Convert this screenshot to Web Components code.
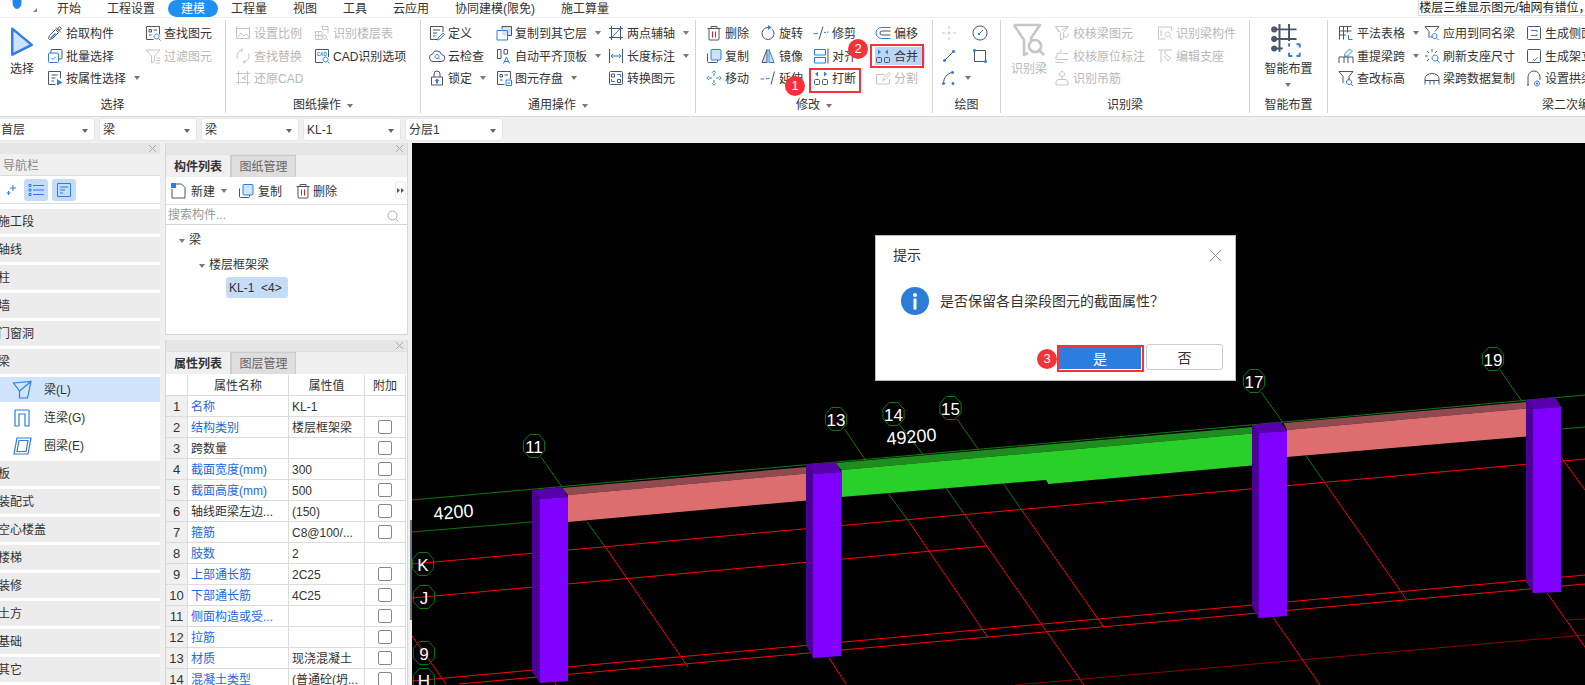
<!DOCTYPE html>
<html lang="zh"><head><meta charset="utf-8"><title>GTJ</title>
<style>
html,body{margin:0;padding:0;height:100%;overflow:hidden;background:#f0f0f0}
body{font:12px/1.2 "Liberation Sans","Noto Sans CJK SC",sans-serif;color:#333}
</style></head><body>
<gtj-app>
  <tab-bar slot="tabs">
    <x-tab>开始</x-tab><x-tab>工程设置</x-tab><x-tab active>建模</x-tab><x-tab>工程量</x-tab><x-tab>视图</x-tab><x-tab>工具</x-tab><x-tab>云应用</x-tab><x-tab>协同建模(限免)</x-tab><x-tab>施工算量</x-tab>
  </tab-bar>
  <r-bar slot="ribbon">
    <r-group w="226" pad="9" label="选择">
      <r-col w="38"><r-large icon="select" isize="26" text="选择"></r-large></r-col>
      <r-col w="98"><r-btn icon="pick" text="拾取构件"></r-btn><r-btn icon="batch" text="批量选择"></r-btn><r-btn icon="attr" text="按属性选择" arrow></r-btn></r-col>
      <r-col><r-btn icon="find" text="查找图元"></r-btn><r-btn off icon="filter" text="过滤图元"></r-btn></r-col>
    </r-group>
    <r-group w="195" pad="9" label="图纸操作" arrow>
      <r-col w="79"><r-btn off icon="scale" text="设置比例"></r-btn><r-btn off icon="replace" text="查找替换"></r-btn><r-btn off icon="restore" text="还原CAD"></r-btn></r-col>
      <r-col><r-btn off icon="floor" text="识别楼层表"></r-btn><r-btn icon="cad" text="CAD识别选项"></r-btn></r-col>
    </r-group>
    <r-group w="275" pad="8" label="通用操作" arrow>
      <r-col w="67"><r-btn icon="define" text="定义"></r-btn><r-btn icon="cloud" text="云检查"></r-btn><r-btn icon="lock" text="锁定" arrow></r-btn></r-col>
      <r-col w="112"><r-btn icon="copylayer" text="复制到其它层" arrow></r-btn><r-btn icon="autoalign" text="自动平齐顶板" arrow></r-btn><r-btn icon="archive" text="图元存盘" arrow></r-btn></r-col>
      <r-col><r-btn icon="axis" text="两点辅轴" arrow></r-btn><r-btn icon="dim" text="长度标注" arrow></r-btn><r-btn icon="convert" text="转换图元"></r-btn></r-col>
    </r-group>
    <r-group w="237" pad="10" label="修改" arrow>
      <r-col w="54"><r-btn icon="del" text="删除"></r-btn><r-btn icon="copy" text="复制"></r-btn><r-btn icon="move" text="移动"></r-btn></r-col>
      <r-col w="53"><r-btn icon="rotate" text="旋转"></r-btn><r-btn icon="mirror" text="镜像"></r-btn><r-btn icon="extend" text="延伸"></r-btn></r-col>
      <r-col w="62"><r-btn icon="trim" text="修剪"></r-btn><r-btn icon="align" text="对齐"></r-btn><r-btn icon="break" text="打断"></r-btn></r-col>
      <r-col><r-btn icon="offset" text="偏移"></r-btn><r-btn hl icon="merge" text="合并"></r-btn><r-btn off icon="split" text="分割"></r-btn></r-col>
    </r-group>
    <r-group w="68" pad="8" label="绘图">
      <r-col w="31"><r-btn off icon="point"></r-btn><r-btn icon="line"></r-btn><r-btn icon="arc" arrow></r-btn></r-col>
      <r-col><r-btn icon="circle"></r-btn><r-btn icon="rect"></r-btn></r-col>
    </r-group>
    <r-group w="249" pad="10" label="识别梁">
      <r-col w="43"><r-large off icon="recog" isize="32" text="识别梁"></r-large></r-col>
      <r-col w="103"><r-btn off icon="chk1" text="校核梁图元"></r-btn><r-btn off icon="chk2" text="校核原位标注"></r-btn><r-btn off icon="hang" text="识别吊筋"></r-btn></r-col>
      <r-col><r-btn off icon="recog2" text="识别梁构件"></r-btn><r-btn off icon="edit" text="编辑支座"></r-btn></r-col>
    </r-group>
    <r-group w="78" pad="0" label="智能布置" center>
      <r-col><r-large icon="smart" isize="34" text="智能布置" arrow></r-large></r-col>
    </r-group>
    <r-group w="488" pad="10" label="梁二次编辑" last>
      <r-col w="86"><r-btn icon="ptable" text="平法表格" arrow></r-btn><r-btn icon="respan" text="重提梁跨" arrow></r-btn><r-btn icon="level" text="查改标高"></r-btn></r-col>
      <r-col w="102"><r-btn icon="apply" text="应用到同名梁"></r-btn><r-btn icon="refresh" text="刷新支座尺寸"></r-btn><r-btn icon="spancopy" text="梁跨数据复制"></r-btn></r-col>
      <r-col><r-btn icon="side" text="生成侧面筋"></r-btn><r-btn icon="stir" text="生成架立筋"></r-btn><r-btn icon="arch" text="设置拱梁"></r-btn></r-col>
    </r-group>
  </r-bar>
  <combo-bar slot="combos">
    <x-combo first>首层</x-combo><x-combo>梁</x-combo><x-combo>梁</x-combo><x-combo>KL-1</x-combo><x-combo>分层1</x-combo>
  </combo-bar>
  <nav-panel slot="nav">
    <nav-cat>施工段</nav-cat><nav-cat>轴线</nav-cat><nav-cat>柱</nav-cat><nav-cat>墙</nav-cat><nav-cat>门窗洞</nav-cat><nav-cat>梁</nav-cat>
    <nav-sub icon="l" active>梁(L)</nav-sub><nav-sub icon="g">连梁(G)</nav-sub><nav-sub icon="e">圈梁(E)</nav-sub>
    <nav-cat>板</nav-cat><nav-cat>装配式</nav-cat><nav-cat>空心楼盖</nav-cat><nav-cat>楼梯</nav-cat><nav-cat>装修</nav-cat><nav-cat>土方</nav-cat><nav-cat>基础</nav-cat><nav-cat>其它</nav-cat>
  </nav-panel>
  <comp-panel slot="comp"></comp-panel>
  <prop-panel slot="prop">
    <prop-row head n="" name="属性名称" val="属性值"></prop-row>
    <prop-row n="1" name="名称" val="KL-1" blue nocheck></prop-row>
    <prop-row n="2" name="结构类别" val="楼层框架梁" blue></prop-row>
    <prop-row n="3" name="跨数量" val=""></prop-row>
    <prop-row n="4" name="截面宽度(mm)" val="300" blue></prop-row>
    <prop-row n="5" name="截面高度(mm)" val="500" blue></prop-row>
    <prop-row n="6" name="轴线距梁左边..." val="(150)"></prop-row>
    <prop-row n="7" name="箍筋" val="C8@100/..." blue></prop-row>
    <prop-row n="8" name="肢数" val="2" blue nocheck></prop-row>
    <prop-row n="9" name="上部通长筋" val="2C25" blue></prop-row>
    <prop-row n="10" name="下部通长筋" val="4C25" blue></prop-row>
    <prop-row n="11" name="侧面构造或受..." val="" blue></prop-row>
    <prop-row n="12" name="拉筋" val="" blue></prop-row>
    <prop-row n="13" name="材质" val="现浇混凝土" blue></prop-row>
    <prop-row n="14" name="混凝土类型" val="(普通砼(坍..." blue></prop-row>
  </prop-panel>
  <cad-scene slot="scene"></cad-scene>
  <msg-dialog slot="over"></msg-dialog>
  <mark-box slot="over" style="left:809px;top:68px;width:52px;height:25px"></mark-box>
  <mark-box slot="over" style="left:870px;top:44px;width:54px;height:24px"></mark-box>
  <mark-box slot="over" style="left:1057px;top:345px;width:87px;height:27px"></mark-box>
  <mark-badge slot="over" style="left:785px;top:76px">1</mark-badge>
  <mark-badge slot="over" style="left:848px;top:39px">2</mark-badge>
  <mark-badge slot="over" style="left:1037px;top:349px">3</mark-badge>
</gtj-app>
<script>
const FONT='"Liberation Sans","Noto Sans CJK SC",sans-serif';
/* d: main stroke, a: accent stroke, f: accent fill, c: accent colour, l: light fill path */
const I={
select:{a:'M2 1l12 10-12 6z',s:2.4,l:'M2 1l12 10-12 6z'},
pick:{d:'M2.5 14.5l-1-1 1-3 6-6 3 3-6 6zM9 2.5l5 5M10 5l2.5-3.5 2 2L11 6',f:'M3 13l5-5 1 1-5 5z'},
find:{d:'M1.5 1.5h13v8M1.5 1.5v13h7M4 4.5h2.5V7H4zM8.5 5h3.5M4 10h2.5',a:'M11.5 9a2.5 2.5 0 1 0 .01 0M13.5 13.5l2 2'},
batch:{d:'M4 5V2.5a1 1 0 0 1 1-1h9a1 1 0 0 1 1 1V10a1 1 0 0 1-1 1h-2',a:'M1.5 6a1 1 0 0 1 1-1h8a1 1 0 0 1 1 1v7.5a1 1 0 0 1-1 1h-8a1 1 0 0 1-1-1zM4.5 10l1.5 1.5 3-3'},
attr:{d:'M1.5 1.5h12v7M1.5 1.5v13h7M4.5 5h6M4.5 8h4M4.5 11h2.5',f:'M10 9l5.5 3.5-5.5 3z'},
filter:{d:'M1 2h14l-5.5 6v5M1 2l5.500 6v7l3-1.500M11 10h4M11 12.500h4M11 15h4'},
scale:{d:'M1.5 3.5h13v10h-13zM1.5 1.5v4M14.5 1.5v4M3 12l3-4 3 3 2-2 3 3'},
replace:{d:'M8 2a6 6 0 0 0-5.5 8.5M8 14a6 6 0 0 0 5.5-8.5M6 .5l2 1.5-2 1.5M10 12.5L8 14l2 1.5'},
restore:{d:'M3.5 1v14M12.5 1v14M1 3.5h14M1 12.5h14M11 6L7 8l4 2M7 8h4'},
floor:{d:'M7 1.5h7v7M8.5 1.5v3h5.5M1.5 6.5h6.5v8H1.5zM1.5 10.5h6.5M4.5 6.5v8M10.5 10a2 2 0 1 0 .01 0M12 13l2 2'},
cad:{d:'M1.5 1.5h13v7.5M1.5 1.5v13h7.5',a:'M11.5 9a2.5 2.5 0 1 0 .01 0M13.5 13.5l2 2',t:'CAD'},
define:{d:'M1.5 1.5h12.5v5.5M1.5 1.5v13h6.5M4 5h7M4 8h4M4 11h2.5',a:'M14 8l-5 5-.5 2 2-.5 5-5z'},
cloud:{d:'M4 13.5h8a3.5 3.5 0 0 0 .5-7 4.7 4.7 0 0 0-9-.5A3.8 3.8 0 0 0 4 13.5z',a:'M8 6.5a2 2 0 1 0 .01 0M9.5 10l1.5 1.5'},
lock:{d:'M2.5 7h11v8h-11zM5 7V4a3 3 0 0 1 6 0v3',f:'M8 8.5l2.5 2.5H9v2.5H7V11H5.5z'},
copylayer:{d:'M6 4V1.5h9.5v9H12',a:'M1 5.5h10.5V15H1z',l:'M6 1.5h9.5v9H6z'},
autoalign:{d:'M1.5 1.5h3.5v9H1.5zM8 1.5h3.5v4.500H8z',a:'M7.5 15.5l3-6.5 3 6.500M8.5 13.500h4'},
archive:{d:'M1.5 1.5h13v7.5M1.5 1.5v13h7M4 4.5h2.5V7H4zM8.5 5h3.5M4 10h2.5',a:'M10 10h5.5v5.5H10zM11.5 13h2.5'},
axis:{d:'M1 3.5h14M3.5 1v14M12.5 1v14M1 12.5h14',a:'M2.5 14L13.5 2'},
dim:{d:'M1.5 1v14M14.5 1v14',a:'M3 8h10M5 6L3 8l2 2M11 6l2 2-2 2'},
convert:{d:'M1.5 2.5a1 1 0 0 1 1-1h11a1 1 0 0 1 1 1v11a1 1 0 0 1-1 1h-11a1 1 0 0 1-1-1zM3.5 4h3v3h-3zM9.5 9.5h3v3h-3z',a:'M9 4.5h3.5V7M7 11.5H3.5V9'},
del:{d:'M1.5 3.5h13M5 3.5v-2h6v2M3 3.5V14a1 1 0 0 0 1 1h8a1 1 0 0 0 1-1V3.5',a:'M6.5 6.5v6M9.5 6.5v6',c:'#e02020'},
rotate:{d:'M8 2.5a6 6 0 1 0 4.5 2',f:'M8 0l3.5 2.5L8 5z'},
trim:{d:'M6 14.5L10 1.5',a:'M.5 8.8l4.5-.5M11 7.5l2-.2M14 7.2l1.5-.1'},
offset:{d:'M15.5 6H7a2 2 0 0 0 0 4h8.5',a:'M15.5 2.5H6.5a5.5 5.5 0 0 0 0 11h9'},
copy:{d:'M1.5 5.5v8a1 1 0 0 0 1 1h8a1 1 0 0 0 1-1V12',a:'M5 2.5a1 1 0 0 1 1-1h8a1 1 0 0 1 1 1V11a1 1 0 0 1-1 1H6a1 1 0 0 1-1-1z',l:'M5 2.5a1 1 0 0 1 1-1h8a1 1 0 0 1 1 1V11a1 1 0 0 1-1 1H6a1 1 0 0 1-1-1z'},
mirror:{d:'M7 1.5L2 14.5h5z',a:'M9 1.5l5 13H9z',l:'M7 1.5L2 14.5h5zM9 1.5l5 13H9z'},
align:{a:'M1.5 1.5h11V7h-11zM1.5 9.5h11V15h-11z',d:'M15 .5v15'},
merge:{d:'M2.5 9.5h3a1 1 0 0 1 1 1v3a1 1 0 0 1-1 1h-3a1 1 0 0 1-1-1v-3a1 1 0 0 1 1-1zM10.5 9.5h3a1 1 0 0 1 1 1v3a1 1 0 0 1-1 1h-3a1 1 0 0 1-1-1v-3a1 1 0 0 1 1-1z',f:'M3 1.5L6 4 3 6.5zM13 1.5L10 4l3 2.5z'},
break:{d:'M2.5 9.5h3a1 1 0 0 1 1 1v3a1 1 0 0 1-1 1h-3a1 1 0 0 1-1-1v-3a1 1 0 0 1 1-1zM10.5 9.5h3a1 1 0 0 1 1 1v3a1 1 0 0 1-1 1h-3a1 1 0 0 1-1-1v-3a1 1 0 0 1 1-1z',f:'M5 1.5L2 4l3 2.5zM11 1.5L14 4l-3 2.5z'},
split:{d:'M1.5 4.5h8M1.5 4.5v9.5h13V9M8 10.5l.5-2.5L14 2.5l1.500 1.500L10 9.500z'},
move:{a:'M8 3v3M8 10v3M3 8h3M10 8h3M6 2.8L8 .8l2 2M6 13.2l2 2 2-2M2.8 6L.8 8l2 2M13.2 6l2 2-2 2'},
extend:{d:'M11 14.5L14.5 1.5',a:'M.5 9h3.5M6 8.7h3.5'},
point:{d:'M8 1v3M8 6.5v3M8 12v3M1 8h3M6.5 8h3M12 8h3'},
line:{d:'M3.5 12.5L12.5 3.5',f:'M3.5 11a1.5 1.5 0 1 0 .01 0M12.5 2a1.5 1.5 0 1 0 .01 0'},
circle:{d:'M8 1a7 7 0 1 0 .01 0',a:'M7 9l4-4',f:'M7 7.8a1.2 1.2 0 1 0 .01 0'},
rect:{d:'M2.5 2.5h11v11h-11z',f:'M2.5 1a1.5 1.5 0 1 0 .01 0M13.5 12a1.5 1.5 0 1 0 .01 0'},
arc:{d:'M2.5 13.5C2.5 8 6 3.5 11 2.5',f:'M2.5 12a1.5 1.5 0 1 0 .01 0M11.5 1a1.5 1.5 0 1 0 .01 0M12 12a1.5 1.5 0 1 0 .01 0'},
recog:{d:'M.5 .5h13L9 7v2M.5 .5L5.5 8v7.5l2-1M11 8a3 3 0 1 0 .01 0M13 13l2.5 2.5',s:2.6},
chk1:{d:'M1.5 1.5h13l-5 6v6l-3 1.5V7.5zM2 3.5L5 7M8 5l5-3M10 11l2 2 3-4'},
chk2:{d:'M7 1.5v4H3v4H1M1.5 11.5h13M1.5 14.5h8M9 5.5h5'},
hang:{d:'M8 1.5a2.5 2.5 0 1 0 .01 0M8 6.5v3M2 15v-3a3 3 0 0 1 3-2.5h6a3 3 0 0 1 3 2.5v3M2 15h12'},
recog2:{d:'M1.5 2h13v4M1.5 2v12h7M4 5v6M10.5 7a2.5 2.5 0 1 0 .01 0M12.5 11.5l2 2'},
edit:{d:'M1 2h14M4 2v12M8 2v4l6 4-3 3-4-5M11 13l3-3'},
smart:{d:'M.5 3h11.5M.5 7.5h11.5M.5 12h5M4 .5v13M8.5 .5v8M1.5 2a1 1 0 1 0 .01 0M1.5 6.500a1 1 0 1 0 .01 0M1.5 11a1 1 0 1 0 .01 0',a:'M9 10h-.5v1M12 10h1.5v1.5M13.5 14v1.5H12M10 15.500H8.500V14',s:2},
ptable:{d:'M1.5 1.5h12M1.5 1.5v13M1.5 6h12M1.5 10h6.5M5.5 1.5v13M9.5 1.5v6',a:'M10.5 10v4.5h4'},
respan:{d:'M1 15V9h14v6M6 9v6M10 9v6',a:'M6.5 8.5l.5-3L11.5 1l2.5 2.5L9.5 8z'},
level:{d:'M1 1.5h14l-4 5v4M1 1.5l4 5V13',a:'M11 9.5a2.5 2.5 0 1 0 .01 0M13 14l2 2'},
apply:{d:'M1 1.5h14l-4 5M1 1.5l4 5V13',a:'M10.5 8.5a2.5 2.5 0 1 0 .01 0M12.5 13l2 2M6.5 11l1.5 2'},
refresh:{d:'M3 3l2 2M8 1v3M13 3l-2 2M1 8h3M3 13l2-2',a:'M11 7a3 3 0 1 0 .01 0M13 12l2.5 2.5'},
spancopy:{d:'M1 8.5v6M15 8.5v6M1 8.5a7 5 0 0 1 14 0M1 10.5h14M6 10.5v4M10 10.5v4'},
side:{d:'M2.5 1.5h11a1 1 0 0 1 1 1v11a1 1 0 0 1-1 1h-11a1 1 0 0 1-1-1v-11a1 1 0 0 1 1-1z',a:'M5 5.5h6v1.5M5 10.5h6V9'},
stir:{d:'M2.5 1.5h11a1 1 0 0 1 1 1v11a1 1 0 0 1-1 1h-11a1 1 0 0 1-1-1v-11a1 1 0 0 1 1-1z',a:'M5 4.5h.01M11 4.5h.01M5 9h.01M7 11l1.5 1.5 3-3'},
arch:{d:'M2 15V7a6 6 0 0 1 12 0v3M1 15h2',a:'M11 11a2.5 2.5 0 1 0 .01 0',f:'M11 12.5a1 1 0 1 0 .01 0'}
};
function ico(n,s=16){const i=I[n]||{};const w=(i.s||1)*16/Math.max(s,16);
 const sw=`stroke-width="${w.toFixed(2)}" stroke-linejoin="round"`;
 return `<svg width="${s}" height="${s}" viewBox="0 0 16 16" fill="none" style="flex:none;display:block;overflow:visible">`+
 (i.l?`<path d="${i.l}" style="fill:var(--lt,#cfe3fb)"/>`:'')+
 (i.d?`<path d="${i.d}" ${sw} style="stroke:var(--dk,#4a5568)"/>`:'')+
 (i.a?`<path d="${i.a}" ${sw} style="stroke:var(--ac,${i.c||'#2b7de9'})"/>`:'')+
 (i.f?`<path d="${i.f}" style="fill:var(--ac,#2b7de9)"/>`:'')+
 (i.t?`<text x="2.8" y="7.5" font-size="4.6" font-weight="700" font-family="Liberation Sans" style="fill:#2b7de9">${i.t}</text>`:'')+`</svg>`;}
const TRI=`display:inline-block;width:0;height:0;border:3px solid transparent;border-top:4px solid #777;border-bottom:0;flex:none`;
class B extends HTMLElement{
 connectedCallback(){if(this.shadowRoot)return;this.attachShadow({mode:'open'}).innerHTML=this.html();}
 a(n,d=''){const v=this.getAttribute(n);return v==null?d:v;}
 h(n){return this.hasAttribute(n);}
}
const def=(n,f)=>customElements.define(n,class extends B{html(){return f.call(this);}});

def('gtj-app',()=>`<style>
:host{display:grid;grid-template-rows:17px 100px 26px 542px;grid-template-columns:160px 5px 243px 4px 1173px;width:1585px;height:685px;overflow:hidden;position:relative;background:#f0f0f0}
.t{grid-column:1/-1}.n{grid-row:4;grid-column:1;overflow:hidden}
.m{grid-row:4;grid-column:3;display:flex;flex-direction:column;gap:5px;overflow:hidden}
.sp{grid-row:4;grid-column:4;padding-top:377px;display:flex;justify-content:flex-end;align-items:flex-start}
.sp i{display:block;width:2px;height:100px;background:#6b7780}
.s{grid-row:4;grid-column:5;overflow:hidden}
</style>
<div class="t"><slot name="tabs"></slot></div><div class="t"><slot name="ribbon"></slot></div><div class="t"><slot name="combos"></slot></div>
<div class="n"><slot name="nav"></slot></div><div class="m"><slot name="comp"></slot><slot name="prop"></slot></div><div class="sp"><i></i></div><div class="s"><slot name="scene"></slot></div>
<slot name="over"></slot>`);

def('tab-bar',()=>`<style>
:host{display:flex;height:17px;background:#fff;overflow:hidden;align-items:stretch}
.logo{width:44px;flex:none}
.logo svg{display:block}
.note{margin-left:796px;flex:none;background:#fff;border-left:1px solid #ddd;border-bottom:1px solid #ddd;height:15px;line-height:17px;font-size:12px;color:#222;white-space:nowrap}
</style><div class="logo"><svg width="44" height="17"><ellipse cx="17" cy="2" rx="4.5" ry="7" fill="#1e88f0"/><path d="M33 12h4V8z" fill="#888"/></svg></div><slot></slot><div class="note">楼层三维显示图元/轴网有错位，</div>`);

def('x-tab',function(){return `<style>
:host{display:block;flex:none;padding:0 13px;height:17px;line-height:19px;font-size:12px;color:#333;${this.h('active')?'background:#1f8ff2;color:#fff;border-radius:9px;':''}}
</style><slot></slot>`});

def('r-bar',()=>`<style>:host{display:flex;height:100px;background:#fff;border-top:1px solid #eee;box-sizing:border-box;overflow:hidden;box-shadow:inset 0 -1px 0 #d8d8d8}</style><slot></slot>`);

def('r-group',function(){return `<style>
:host{display:flex;flex-direction:column;flex:none;width:${this.a('w')}px;box-sizing:border-box;margin:2px 0 4px;${this.h('last')?'':'border-right:1px solid #d4d4d4;'}}
.b{flex:1;display:flex;padding:2px 0 0 ${this.a('pad')}px;${this.h('center')?'justify-content:center;':''}}
.l{height:21px;box-sizing:border-box;padding-top:6px;display:flex;align-items:center;justify-content:center;gap:6px;font-size:12px;color:#333;white-space:nowrap}
.l i{${TRI}}
</style><div class="b"><slot></slot></div><div class="l">${this.a('label')}${this.h('arrow')?'<i></i>':''}</div>`});

def('r-col',function(){const w=this.a('w');return `<style>:host{display:block;flex:none;${w?`width:${w}px;`:''}}</style><slot></slot>`});

def('r-btn',function(){const t=this.a('text');return `<style>
:host{display:block;height:22.5px;${this.h('off')?'--dk:#c6c6c6;--ac:#c6c6c6;--lt:transparent;color:#b8b8b8;':'color:#333;'}}
.r{display:inline-flex;align-items:center;gap:3px;height:22.5px;white-space:nowrap;font-size:12px;box-sizing:border-box}
span{padding-top:2px}
${this.h('hl')?'.r{background:linear-gradient(#bcd6f5,#bcd6f5) no-repeat 0 50%/50px 18px;width:50px;}':''}
i{${TRI};margin-left:5px}
</style><div class="r">${ico(this.a('icon'))}${t?`<span>${t}</span>`:''}${this.h('arrow')?'<i></i>':''}</div>`});

def('r-large',function(){return `<style>
:host{display:flex;flex-direction:column;align-items:center;width:fit-content;${this.h('off')?'--dk:#c6c6c6;--ac:#c6c6c6;color:#b8b8b8;':'color:#333;'}}
.ic{height:35px;display:flex;align-items:center;justify-content:center}
.t{font-size:12px;white-space:nowrap;line-height:16px;margin-top:4px}
i{${TRI};margin-top:6px}
</style><div class="ic">${ico(this.a('icon'),+this.a('isize'))}</div><div class="t">${this.a('text')}</div>${this.h('arrow')?'<i></i>':''}`});

def('combo-bar',()=>`<style>:host{display:flex;gap:4px;height:26px;padding-top:1px;box-sizing:border-box;background:#f0f0f0;overflow:hidden}</style><slot></slot>`);
def('x-combo',function(){return `<style>
:host{display:flex;align-items:center;justify-content:space-between;flex:none;width:98px;height:23px;box-sizing:border-box;padding:2px 6px 0 3px;background:#fff;border-radius:3px;border:1px solid #e6e6e6;font-size:12px;color:#333;${this.h('first')?'margin-left:-3px;':''}}
i{${TRI};border-top-color:#666}
</style><span><slot></slot></span><i></i>`});

const X=(c='#aaa')=>`<svg width="9" height="9" viewBox="0 0 9 9"><path d="M1 1l7 7M8 1L1 8" stroke="${c}" fill="none"/></svg>`;
const L_ICONS={
 l:`<svg width="20" height="20" viewBox="0 0 20 20" fill="none" stroke="#2b7de9" stroke-width="1.2"><path d="M1.5 3L19 1.500 15.500 18H7.500V11zM7.500 11L19 1.500M7.500 11"/></svg>`,
 g:`<svg width="20" height="20" viewBox="0 0 20 20" fill="none" stroke="#2b7de9" stroke-width="1.2"><path d="M3 18V3a1 1 0 0 1 1-1h12a1 1 0 0 1 1 1v15h-4V6H7v12z"/></svg>`,
 e:`<svg width="20" height="20" viewBox="0 0 20 20" fill="none" stroke="#2b7de9" stroke-width="1.2"><path d="M5 2h14l-3 16H2zM7 4.5h9l-2 11H5z" /></svg>`
};
def('nav-panel',()=>`<style>
:host{display:flex;flex-direction:column;height:542px;background:#fff;overflow:hidden}
.h{height:11px;background:#e6e6e6;display:flex;justify-content:flex-end;align-items:center;padding-right:3px}
.t{height:22px;background:#f0f0f0;color:#888;display:flex;align-items:center;padding:3px 0 0 3px;font-size:12px;border-bottom:1px solid #ddd;box-sizing:border-box}
.tb{height:27px;border-bottom:1px solid #ddd;display:flex;align-items:center;padding-left:3px;gap:4px;margin-bottom:5px}
.tb b{width:24px;height:22px;border-radius:3px;background:#c4dcf7;display:flex;align-items:center;justify-content:center}
.plus{width:17px}
</style><div class="h">${X()}</div><div class="t">导航栏</div>
<div class="tb"><svg class="plus" width="10" height="12" viewBox="0 0 10 12" fill="none" stroke="#2b7de9"><path d="M6.5 1v6M3.5 4h6M2 7v4M0 9h4"/></svg>
<b><svg width="16" height="14" fill="none" stroke="#2b7de9"><path d="M5 2.5h11M5 7h11M5 11.5h11M1 1.5h2v2H1zM1 6h2v2H1zM1 10.5h2v2H1z"/></svg></b>
<b><svg width="16" height="16" fill="none" stroke="#2b7de9"><path d="M1.5 1.5h13v13h-13zM4 5h8M4 8h5M4 11h3"/></svg></b></div>
<slot></slot>`);
def('nav-cat',()=>`<style>:host{display:block;height:25px;line-height:27px;background:#ececec;margin-bottom:3px;text-indent:-2px;font-size:12px;color:#333;overflow:hidden;flex:none}</style><slot></slot>`);
def('nav-sub',function(){return `<style>
:host{display:flex;align-items:center;height:25px;margin-bottom:3px;padding-left:12px;font-size:12px;color:#333;flex:none;${this.h('active')?'background:#d0e5fb;':''}}
span{margin-left:12px;padding-top:2px}
</style>${L_ICONS[this.a('icon')]}<span><slot></slot></span>`});

const PANEL_CSS=`
.h{height:11px;background:#e6e6e6;display:flex;justify-content:flex-end;align-items:center;padding-right:3px;flex:none}
.tabs{height:22px;background:#f0f0f0;display:flex;flex:none;border-top:1px solid #e0e0e0}
.tabs b{width:65px;font-weight:700;display:flex;align-items:center;justify-content:center;padding-top:2px;font-size:12px;color:#333;border-right:1px solid #ccc;box-sizing:border-box}
.tabs b.o{font-weight:400;background:#dedede;color:#666;border:1px solid #ccc;border-bottom:0}
`;
def('comp-panel',()=>`<style>
:host{display:flex;flex-direction:column;width:243px;height:192px;background:#fff;box-sizing:border-box;border:1px solid #d8d8d8;border-top:0;flex:none;overflow:hidden}
${PANEL_CSS}
.tb{height:28px;box-sizing:border-box;display:flex;align-items:center;flex:none;border-bottom:1px solid #e2e2e2;position:relative;font-size:12px;color:#333;white-space:nowrap}
.tb .x{padding-top:3px}
.tb i{${TRI}}
.more{position:absolute;left:229px;top:4px;width:11px;height:18px;border:1px solid #eee;border-radius:3px;display:flex;align-items:center;justify-content:center;box-sizing:border-box}
.s{height:19px;display:flex;justify-content:space-between;align-items:center;padding:2px 8px 0 2px;box-sizing:border-box;height:20px;color:#999;border-bottom:1px solid #d8d8d8;flex:none;font-size:12px}
.tree{flex:1;font-size:12px;color:#333;padding-top:2px}
.row{display:flex;align-items:center;height:25px;box-sizing:border-box;padding-top:2px}
.row i{${TRI};margin-right:4px}
.sel{background:#c5dcf6;border-radius:3px;height:21px;width:62px;margin:0 0 0 60px;padding:2px 0 0 3px;box-sizing:border-box;display:flex;align-items:center;white-space:pre}
</style>
<div class="h">${X()}</div>
<div class="tabs"><b>构件列表</b><b class="o">图纸管理</b></div>
<div class="tb">
 <span style="margin-left:5px;display:flex"><svg width="15" height="16" fill="none" stroke="#4a5568"><path d="M1 6v9h13V4.5L10.500 1H5"/><path d="M0 0h5v5H0z" fill="#2b7de9" stroke="none"/></svg></span>
 <span class="x" style="margin-left:5px">新建</span><i style="margin-left:6px"></i>
 <span style="margin-left:11px">${ico('copy')}</span><span class="x" style="margin-left:4px">复制</span>
 <span style="margin-left:13px">${ico('del')}</span><span class="x" style="margin-left:2px">删除</span>
 <div class="more"><svg width="7" height="7"><path d="M0 1l3 2.5L0 6zM4 1l3 2.5L4 6z" fill="#555"/></svg></div>
</div>
<div class="s"><span>搜索构件...</span><svg width="12" height="12" fill="none" stroke="#aaa"><circle cx="5.5" cy="5.5" r="4.5"/><path d="M9 9l2.5 2.5"/></svg></div>
<div class="tree">
 <div class="row" style="padding-left:13px"><i></i>梁</div>
 <div class="row" style="padding-left:33px"><i></i>楼层框架梁</div>
 <div class="sel">KL-1  &lt;4&gt;</div>
</div>`);
def('prop-panel',()=>`<style>
:host{display:flex;flex-direction:column;width:243px;flex:1;background:#fff;box-sizing:border-box;border-left:1px solid #d8d8d8;border-right:1px solid #d8d8d8;overflow:hidden;min-height:0}
${PANEL_CSS}
.c{display:block;padding-top:1px}
</style><div class="h">${X()}</div><div class="tabs"><b>属性列表</b><b class="o">图层管理</b></div><div class="c"><slot></slot></div>`);
def('prop-row',function(){const hd=this.h('head');const chk=!hd&&!this.h('nocheck');
return `<style>
:host{display:grid;grid-template-columns:22px 101px 76px 41px;height:21px;font-size:12px;color:#333}
div{border-right:1px solid #dcdcdc;border-bottom:1px solid #dcdcdc;display:flex;align-items:center;box-sizing:border-box;white-space:nowrap;overflow:hidden;padding:${hd?2:3}px 0 0 3px}
.n{background:#f0f0f0;justify-content:center;padding:2px 0 0;font-size:13px}
.c{justify-content:center;padding:${hd?'2px 0 0':'0'}}
.hd{justify-content:center;padding:2px 0 0}
.name{${this.h('blue')?'color:#2567e0;':''}}
u{display:block;width:14px;height:14px;box-sizing:border-box;border:1px solid #888;border-radius:2px;background:#fff}
</style><div class="n" ${hd?'style="background:#fff"':''}>${this.a('n')}</div><div class="name ${hd?'hd':''}">${this.a('name')}</div><div class="${hd?'hd':''}">${this.a('val')}</div><div class="c">${hd?'附加':(chk?'<u></u>':'')}</div>`});

def('cad-scene',()=>{
 const GR='#0b7a0b',RD='#ff0000',DR='#8c0000';
 const seg=(x1,y1,x2,y2,c,w=1)=>`<line x1="${x1}" y1="${y1}" x2="${x2}" y2="${y2}" stroke="${c}" stroke-width="${w}"/>`;
 const poly=(p,c)=>`<polygon points="${p}" fill="${c}"/>`;
 const oct=(cx,cy,t)=>{let p=[];for(let k=0;k<8;k++){const a=Math.PI/8+k*Math.PI/4;p.push((cx+11.5*Math.cos(a)).toFixed(1)+','+(cy+12.5*Math.sin(a)).toFixed(1));}
  return `<polygon points="${p.join(' ')}" fill="none" stroke="${GR}"/><text x="${cx}" y="${cy+6.5}" text-anchor="middle" font-size="17" fill="#fff" font-family="Liberation Sans">${t}</text>`};
 const col=(s,t,f)=>poly(s,'#4b0096')+poly(t,'#5500aa')+poly(f,'#8000ff');
 let g='';
 g+=seg(412,564,1585,459,RD)+seg(412,598,987,546,RD)+seg(412,681,1585,575,RD)+seg(459,684,1585,584,RD);
 g+=seg(1015,685,1585,635,DR)+seg(1567,620,1585,619,DR);
 g+=seg(606,548,688,667,RD)+seg(908.5,521,987.5,637,RD)+seg(965,515,1084,685,RD)+seg(1021.6,510,1103.7,627,RD)+seg(1325,483,1406,599,RD)+seg(1564.5,462,1585,490,RD);
 g+=seg(829,658,846,684,RD)+seg(1273.5,618,1320,685,RD)+seg(1547,593,1585,647,RD)+seg(412,636,446,684,RD)+seg(555,682,556,685,RD);
 g+=seg(412,500,1585,395,GR)+seg(412,532,532,522,GR)+seg(1561,429,1585,427,GR);
 g+=seg(541,457,562,487,GR)+seg(587,522,606,548,GR)+seg(844.5,429,866,461,GR)+seg(888.6,494,908.5,521,GR)+seg(899,424,923.5,455,GR)+seg(946,488,965,515,GR)+seg(957,419,978,449,GR)+seg(1003,483,1021.6,510,GR)+seg(1261,392,1282.5,422,GR)+seg(1306,456,1325,483,GR)+seg(1500,370,1521.6,401,GR)+seg(1561,457,1564.5,462,GR);
 g+=poly('562,488 807,467 812.5,473 568,495','#8f4a50')+poly('568,495 812.5,473 812.5,500 568,522','#dc6e70');
 g+=poly('835,463 1252,427 1257.5,433 841.5,470','#1e8c1e')+poly('841.5,470 1257.5,433 1257.5,465 1048.5,484 1046,480 841.5,497','#2ad02a');
 g+=poly('1283.6,423 1526,402 1532,408 1287,430','#8f4a50')+poly('1287,430 1532,408 1532,436 1287,457','#dc6e70');
 g+=col('532,490 540,499 540,683 532,672','532,490 562,487 568,497 540,499','540,499 568,497 568,681 540,683');
 g+=col('806,464 813,474 813,658 806,645','806,464 835.5,462 841.5,472 813,474','813,474 841.5,472 841.5,656 813,658');
 g+=col('1252,425 1258.5,433 1258.5,618 1252,607','1252,425 1280.5,422 1287,431 1258.5,433','1258.5,433 1287,431 1287,616 1258.5,618');
 g+=col('1526,400 1533,409 1533,593 1526,582','1526,400 1555,397 1561,407 1533,409','1533,409 1561,407 1561,592 1533,593');
 [[534,446,'11'],[836,419,'13'],[893.5,414,'14'],[950.5,408,'15'],[1254,381,'17'],[1493,359,'19'],[423,564,'K'],[424,597,'J'],[424,653,'9'],[424,680,'H']].forEach(v=>g+=oct(...v));
 const dim=(x,y,t)=>`<text x="${x}" y="${y}" transform="rotate(-5 ${x} ${y})" font-size="18" fill="#fff" font-family="Liberation Sans">${t}</text>`;
 g+=dim(434,520,'4200')+dim(887,445,'49200');
 return `<style>:host{display:block;width:1173px;height:542px;background:#000}svg{display:block}</style><svg width="1173" height="542" viewBox="412 143 1173 542">${g}</svg>`;
});

def('msg-dialog',()=>`<style>
:host{position:absolute;left:875px;top:235px;width:361px;height:146px;box-sizing:border-box;background:#fff;border:1px solid #bbb;display:flex;flex-direction:column;color:#333;font-size:14px}
.h{height:38px;display:flex;align-items:center;justify-content:space-between;padding:0 13px 0 17px;flex:none}
.b{height:54px;display:flex;align-items:center;gap:11px;padding-left:25px;flex:none}
.f{margin-top:16px;display:flex;justify-content:flex-end;gap:5px;padding-right:12px}
button{font:14px ${FONT};height:26px;border-radius:3px;padding:0;cursor:default}
.y{width:82px;height:23px;margin-top:2px;background:#2b7de0;color:#fff;border:0;border-radius:0}
.n{width:77px;background:#fff;border:1px solid #ccc;color:#333}
.q{font-family:"Noto Sans CJK TC",sans-serif}
</style>
<div class="h"><span>提示</span><svg width="13" height="13" viewBox="0 0 13 13"><path d="M1 1l11 11M12 1L1 12" stroke="#888" fill="none"/></svg></div>
<div class="b"><svg width="28" height="28" viewBox="0 0 28 28"><circle cx="14" cy="14" r="14" fill="#2b7dd8"/><circle cx="14" cy="8" r="2" fill="#fff"/><rect x="12.5" y="11.5" width="3" height="11" fill="#fff"/></svg><span>是否保留各自梁段图元的截面属性<span class="q">？</span></span></div>
<div class="f"><button class="y">是</button><button class="n">否</button></div>`);

def('mark-box',()=>`<style>:host{position:absolute;box-sizing:border-box;border:2px solid #f53238;pointer-events:none}</style>`);
def('mark-badge',()=>`<style>:host{position:absolute;width:20px;height:20px;border-radius:50%;background:#f53238;color:#fff;font-size:13px;line-height:20px;text-align:center}</style><slot></slot>`);
</script>
</body></html>
